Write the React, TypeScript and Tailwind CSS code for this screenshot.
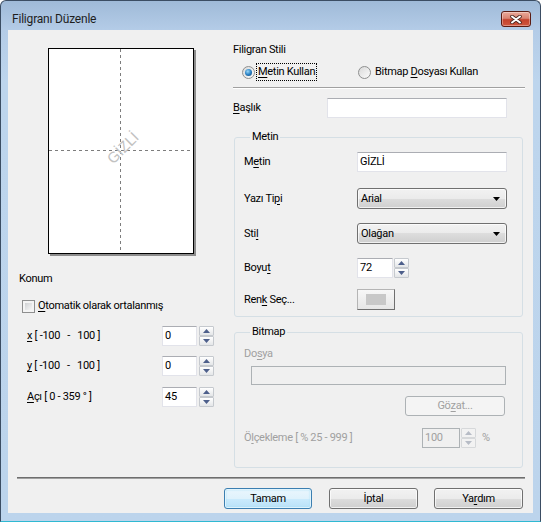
import React from 'react'

const btnFace =
  'bg-[linear-gradient(to_bottom,#f2f2f2_0%,#ebebeb_50%,#dddddd_50%,#cfcfcf_100%)] shadow-[inset_0_0_0_1px_rgba(255,255,255,0.7)]'
const textBox = 'bg-white border border-[#e2e3ea] border-t-[#abadb3] flex items-center pl-[2px]'

function U({ children }: { children: React.ReactNode }) {
  return <span className="underline decoration-1 underline-offset-[2px]">{children}</span>
}

function Arrow({ up, color }: { up?: boolean; color: string }) {
  return (
    <svg width="7" height="4" viewBox="0 0 7 4">
      <path d={up ? 'M0 4h7L3.5 0z' : 'M0 0h7L3.5 4z'} fill={color} />
    </svg>
  )
}

function Spinner({ disabled }: { disabled?: boolean }) {
  const half = disabled
    ? 'flex-1 flex items-center justify-center border border-[#d6d8da] bg-[#f2f2f2] rounded-[1px]'
    : 'flex-1 flex items-center justify-center border border-[#c5c9ce] bg-[linear-gradient(to_bottom,#ffffff,#e4e6e8)] rounded-[1px]'
  const c = disabled ? '#b7bcc6' : '#4d5f8b'
  return (
    <div className="flex flex-col w-[15px] h-[20px]">
      <div className={half}>
        <Arrow up color={c} />
      </div>
      <div className={half}>
        <Arrow color={c} />
      </div>
    </div>
  )
}

function Combo({ value }: { value: string }) {
  return (
    <div
      className={`w-[150px] h-[21px] rounded-[3px] border border-[#707070] ${btnFace} flex items-center pl-[3px] pr-[6px]`}
    >
      <span className="flex-1">{value}</span>
      <Arrow color="#000" />
    </div>
  )
}

function Button({
  children,
  primary,
  className = '',
}: {
  children: React.ReactNode
  primary?: boolean
  className?: string
}) {
  const face = primary
    ? 'border-[#3c7fb1] bg-[linear-gradient(to_bottom,#eaf6fd_0%,#dff2fc_50%,#cbebfd_50%,#b9e1f7_100%)] shadow-[inset_0_0_0_1px_rgba(255,255,255,0.6),inset_0_0_2px_1px_#a8e0f8]'
    : `border-[#707070] ${btnFace}`
  return (
    <div className={`h-[21px] rounded-[3px] border flex items-center justify-center ${face} ${className}`}>
      {children}
    </div>
  )
}

function Radio({ checked }: { checked?: boolean }) {
  return (
    <div className="w-[13px] h-[13px] rounded-full border border-[#8e8f8f] bg-[linear-gradient(135deg,#d9d9d9,#fbfbfb)] flex items-center justify-center">
      {checked && (
        <div className="w-[7px] h-[7px] rounded-full bg-[radial-gradient(circle_at_40%_35%,#9ad8f8_0%,#2b82c5_50%,#0d3f73_100%)]" />
      )}
    </div>
  )
}

function Preview() {
  return (
    <div className="relative w-[146px] h-[206px] border border-black bg-white shadow-[2px_2px_0_#8d8d8d] mt-[18px] ml-[40px]">
      <svg className="absolute left-0 top-0" width="144" height="204">
        <line x1="71.5" y1="0" x2="71.5" y2="204" stroke="#7d7d7d" strokeDasharray="3 3" />
        <line x1="0" y1="101.5" x2="144" y2="101.5" stroke="#7d7d7d" strokeDasharray="3 3" />
      </svg>
      <div className="absolute left-[74px] top-[99px] -translate-x-1/2 -translate-y-1/2 -rotate-45 text-[15px] leading-[16px] tracking-normal text-[#c2c2c2] font-[Liberation_Sans,Arial,sans-serif]">
        GİZLİ
      </div>
    </div>
  )
}

function NumRow({ label, value, className }: { label: React.ReactNode; value: string; className: string }) {
  return (
    <div className={`flex items-center h-[20px] ${className}`}>
      <div className="w-[154px] pl-[19px] whitespace-pre">{label}</div>
      <div className={`${textBox} w-[35px] h-[20px]`}>{value}</div>
      <div className="ml-[2px]">
        <Spinner />
      </div>
    </div>
  )
}

export default function App() {
  return (
    <div className="w-[541px] h-[522px] flex flex-col overflow-hidden rounded-t-[6px] border border-[#3b4d63] border-b-[#2fb9d2] bg-[linear-gradient(to_bottom,#9fbad8_0px,#b4cce7_29px,#bdd5ed_80px,#bcd4ec_100%)] text-[11px] leading-[16px] tracking-[-0.3px] text-black font-[Roboto,sans-serif]">
      {/* title bar */}
      <div className="h-[29px] flex items-start pt-[10px]">
        <div className="ml-[11px] text-[12px] leading-[16px] tracking-[-0.2px] text-[#1e1e1e]">Filigranı Düzenle</div>
        <div className="ml-auto mr-[9px] w-[30px] h-[16px] rounded-[3px] border border-[#5b1c13] bg-[linear-gradient(to_bottom,#eaa99a_0%,#d98472_45%,#c4432d_55%,#d0573f_100%)] shadow-[inset_0_0_0_1px_rgba(255,255,255,0.35)] flex items-center justify-center">
          <svg width="12" height="9" viewBox="0 0 12 9">
            <path d="M2 1.5L10 7.5M10 1.5L2 7.5" stroke="#4b2620" strokeWidth="3.6" strokeLinecap="round" />
            <path d="M2 1.5L10 7.5M10 1.5L2 7.5" stroke="#ffffff" strokeWidth="2" strokeLinecap="round" />
          </svg>
        </div>
      </div>

      {/* client */}
      <div className="mx-[7px] h-[483px] bg-[#f0f0f0] flex flex-col">
        <div className="h-[447px] flex">
          {/* left column */}
          <div className="w-[225px] flex flex-col">
            <Preview />
            <div className="mt-[17px] ml-[11px]">Konum</div>
            <div className="mt-[11px] ml-[14px] h-[16px] flex items-center">
              <div className="w-[13px] h-[13px] border border-[#8e8f8f] bg-[#f4f4f4] p-[2px]">
                <div className="w-full h-full bg-[linear-gradient(135deg,#cfd1d3,#f7f7f7)]" />
              </div>
              <span className="ml-[3px]">
                <U>O</U>tomatik olarak ortalanmış
              </span>
            </div>
            <NumRow
              className="mt-[12px]"
              value="0"
              label={
                <>
                  <U>x</U> [ -100   -   100 ]
                </>
              }
            />
            <NumRow
              className="mt-[10px]"
              value="0"
              label={
                <>
                  <U>y</U> [ -100   -   100 ]
                </>
              }
            />
            <NumRow
              className="mt-[11px]"
              value="45"
              label={
                <>
                  <U>A</U>çı [ 0 - 359 ° ]
                </>
              }
            />
          </div>

          {/* right column */}
          <div className="w-[292px] flex flex-col">
            <div className="mt-[12px]">Filigran Stili</div>
            <div className="mt-[5px] h-[18px] flex items-center">
              <div className="w-[125px] pl-[9px] flex items-center">
                <Radio checked />
                <div className="ml-[1px] h-[18px] border border-dotted border-black px-[1px] flex items-center">
                  <U>M</U>etin Kullan
                </div>
              </div>
              <Radio />
              <span className="ml-[4px]">
                Bitmap <U>D</U>osyası Kullan
              </span>
            </div>
            <div className="mt-[6px] h-[2px] border-t border-t-[#a0a0a0] border-b border-b-white" />
            <div className="mt-[9px] h-[20px] flex items-center">
              <div className="w-[94px]">
                <U>B</U>aşlık
              </div>
              <div className={`${textBox} w-[180px] h-[20px]`} />
            </div>

            {/* Metin group */}
            <fieldset className="mt-[11px] ml-[1px] w-[289px] border border-[#d5dfe5] rounded-[3px] pl-[9px] pb-[6px]">
              <legend className="ml-[6px] px-[2px] leading-[16px]">Metin</legend>
              <div className="mt-[7px] h-[20px] flex items-center">
                <div className="w-[113px]">
                  M<U>e</U>tin
                </div>
                <div className={`${textBox} w-[150px] h-[20px]`}>GİZLİ</div>
              </div>
              <div className="mt-[16px] h-[21px] flex items-center">
                <div className="w-[113px]">
                  Yazı Ti<U>p</U>i
                </div>
                <Combo value="Arial" />
              </div>
              <div className="mt-[14px] h-[21px] flex items-center">
                <div className="w-[113px]">
                  Sti<U>l</U>
                </div>
                <Combo value="Olağan" />
              </div>
              <div className="mt-[14px] h-[20px] flex items-center">
                <div className="w-[113px]">
                  Boyu<U>t</U>
                </div>
                <div className={`${textBox} w-[36px] h-[20px]`}>72</div>
                <div className="ml-[1px]">
                  <Spinner />
                </div>
              </div>
              <div className="mt-[11px] h-[21px] flex items-center">
                <div className="w-[113px]">
                  Ren<U>k</U> Seç...
                </div>
                <div className="w-[38px] h-[21px] border border-[#b5b5b5] border-r-[#6f6f6f] border-b-[#6f6f6f] bg-[linear-gradient(to_bottom,#f7f7f7,#e6e6e6)] flex items-center justify-center">
                  <div className="w-[20px] h-[11px] bg-[#c8c8c8]" />
                </div>
              </div>
            </fieldset>

            {/* Bitmap group */}
            <fieldset className="mt-[7px] ml-[1px] w-[289px] border border-[#d5dfe5] rounded-[3px] pl-[9px] pb-[19px]">
              <legend className="ml-[6px] px-[2px] leading-[16px]">Bitmap</legend>
              <div className="mt-[6px] text-[#a0a0a0]">
                Do<U>s</U>ya
              </div>
              <div className="mt-[4px] ml-[7px] w-[255px] h-[19px] border border-[#adb2b5] bg-[#f0f0f0]" />
              <div className="mt-[11px] ml-[161px] w-[100px] h-[20px] rounded-[3px] border border-[#adb2b5] bg-[#f4f4f4] flex items-center justify-center text-[#a0a0a0]">
                Gö<U>z</U>at...
              </div>
              <div className="mt-[12px] h-[20px] flex items-center text-[#a0a0a0]">
                <div className="w-[178px] whitespace-pre">
                  Ö<U>l</U>çekleme [ % 25 - 999 ]
                </div>
                <div className="w-[38px] h-[20px] border border-[#adb2b5] bg-[#f0f0f0] flex items-center pl-[2px]">
                  100
                </div>
                <div className="ml-[1px]">
                  <Spinner disabled />
                </div>
                <span className="ml-[6px]">%</span>
              </div>
            </fieldset>
          </div>
        </div>

        <div className="ml-[9px] w-[508px] h-[2px] border-t border-t-[#6e6e6e] border-b border-b-[#a0a0a0]" />

        <div className="mt-[9px] flex">
          <Button primary className="ml-[216px] w-[88px]">
            Tamam
          </Button>
          <Button className="ml-[17px] w-[89px]">İptal</Button>
          <Button className="ml-[16px] w-[89px]">
            Ya<U>r</U>dım
          </Button>
        </div>
      </div>
    </div>
  )
}
